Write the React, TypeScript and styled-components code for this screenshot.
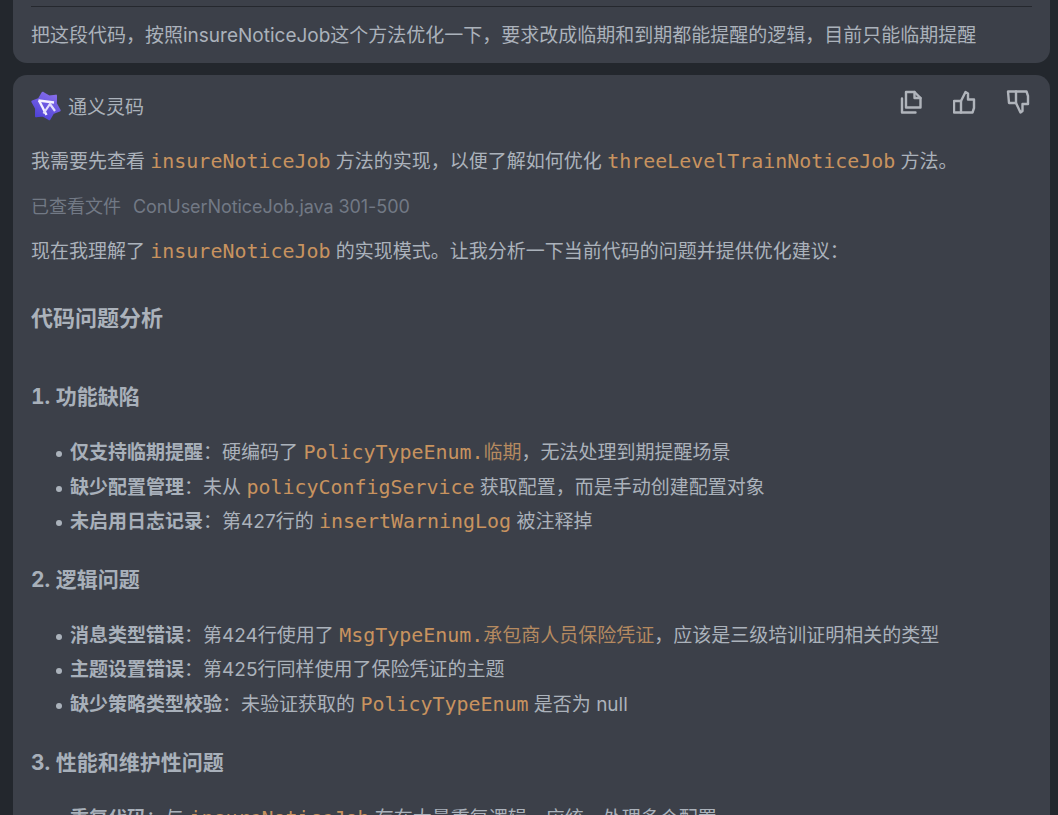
import React from "react";
import styled, { createGlobalStyle } from "styled-components";

const Global = createGlobalStyle`
  html, body { margin: 0; padding: 0; height: 815px; overflow: hidden; background: #23272d; }
  #root { height: 815px; overflow: hidden; }
`;

const Page = styled.div`
  padding: 0 8px 0 13px;
  display: flex;
  flex-direction: column;
  gap: 12px;
  font-family: "Inter", "Noto Sans CJK SC", sans-serif;
  font-size: 19px;
  color: #abb2bb;
`;

const QuestionCard = styled.section`
  height: 63px;
  box-sizing: border-box;
  background: #3c4049;
  border-radius: 0 0 14px 14px;
  padding: 6px 18px 0;
`;

const Rule = styled.div`
  height: 1px;
  background: #25282e;
  margin-bottom: 14px;
`;

const QuestionText = styled.div`
  line-height: 30px;
`;

const AnswerCard = styled.section`
  background: #3c4049;
  border-radius: 14px 14px 0 0;
  padding: 11px 18px 0;
  height: 760px;
  box-sizing: border-box;
`;

const Header = styled.header`
  display: flex;
  align-items: center;
  justify-content: space-between;
  height: 38px;
`;

const Brand = styled.div`
  display: flex;
  align-items: center;
  gap: 7px;
  margin-top: 1px;
`;

const Actions = styled.div`
  display: flex;
  gap: 29px;
  margin-top: -6px;
  margin-right: 2px;
`;

const Para = styled.p<{ $top: number }>`
  margin: ${(p) => p.$top}px 0 0;
  line-height: 30px;
`;

const Muted = styled.p`
  margin: 15px 0 0;
  line-height: 30px;
  font-size: 18px;
  color: #727985;
  display: flex;
  gap: 12px;
`;

const MutedFile = styled.span`
  letter-spacing: -0.07px;
`;

const Code = styled.code`
  font-family: "DejaVu Sans Mono", monospace;
  font-size: 19.95px;
  line-height: 1;
  color: #c8935f;
`;

const CodeCn = styled.span`
  font-family: "Inter", "Noto Sans CJK SC", sans-serif;
  font-size: 19px;
  color: #b58a60;
`;

const H2 = styled.h2`
  margin: 29px 0 0;
  font-size: 22px;
  line-height: 44px;
  font-weight: 700;
  color: #abb2bb;
`;

const H3 = styled.h3<{ $top: number }>`
  margin: ${(p) => p.$top}px 0 0;
  font-size: 21px;
  line-height: 36px;
  font-weight: 700;
  font-variant-numeric: tabular-nums;
  color: #a8b0ba;
`;

const List = styled.ul`
  margin: 21px 0 0;
  padding: 0 0 0 39px;
  list-style: none;
  line-height: 34.5px;
`;

const Item = styled.li`
  &::before {
    content: "";
    display: inline-block;
    width: 6px;
    height: 6px;
    border-radius: 50%;
    background: #abb2bb;
    margin: 0 8px 0 -14px;
    vertical-align: 2px;
  }
`;

const Strong = styled.strong`
  font-weight: 700;
  color: #a8b0ba;
`;

const LogoMark = styled.svg`
  width: 30px;
  height: 30px;
  flex: none;
`;

const Logo = () => (
  <LogoMark viewBox="0 0 30 30">
    <defs>
      <linearGradient id="lg" x1="0.1" y1="1" x2="0.9" y2="0">
        <stop offset="0" stopColor="#4a3fd6" />
        <stop offset="1" stopColor="#8a70ea" />
      </linearGradient>
    </defs>
    <g transform="rotate(-14 15 15)">
      <path
        d="M15 1.5 L20 6.6 L27 7.5 L25 15 L27 22.5 L20 23.4 L15 28.5 L10 23.4 L3 22.5 L5 15 L3 7.5 L10 6.6 Z"
        fill="url(#lg)"
        stroke="url(#lg)"
        strokeWidth="2.4"
        strokeLinejoin="round"
      />
    </g>
    <path d="M7.5 9.5 L23 11.5" stroke="#f4f2ff" strokeWidth="2.4" fill="none" />
    <path d="M8 9.5 L15.5 24" stroke="#f4f2ff" strokeWidth="2.4" fill="none" />
    <path d="M12.5 22.5 L19 13 L24 20" stroke="#e2ddfb" strokeWidth="2.2" fill="none" />
  </LogoMark>
);

const IconSvg = styled.svg`
  width: 24px;
  height: 24px;
  fill: none;
  stroke: #b0b4bb;
  stroke-width: 2.4;
  stroke-linejoin: round;
  stroke-linecap: round;
`;

const CopyIcon = () => (
  <IconSvg viewBox="0 0 24 24">
    <path d="M6 2 H14.5 L20.5 8 V17.5 H6 Z" />
    <path d="M14.5 2 V8 H20.5" />
    <path d="M2 8.5 V22.5 H15.5" />
  </IconSvg>
);

const ThumbUp = () => (
  <IconSvg viewBox="0 0 24 24">
    <path d="M1 11 H8 V22.5 H1 Z" />
    <path d="M8 11 L12.5 2 L15 3.5 V9.5 H21 V18 L19.5 22.5 H8" />
  </IconSvg>
);

const ThumbDown = () => (
  <IconSvg viewBox="0 0 24 24">
    <path d="M2 1.5 H10 V13 H3 Z" />
    <path d="M10 13 L14.5 22.5 L16.5 21 V14 H22 V6 L20.5 1.5 H10" />
  </IconSvg>
);

export default function App() {
  return (
    <Page>
      <Global />
      <QuestionCard>
        <Rule />
        <QuestionText>把这段代码，按照insureNoticeJob这个方法优化一下，要求改成临期和到期都能提醒的逻辑，目前只能临期提醒</QuestionText>
      </QuestionCard>
      <AnswerCard>
        <Header>
          <Brand>
            <Logo />
            <span>通义灵码</span>
          </Brand>
          <Actions>
            <CopyIcon />
            <ThumbUp />
            <ThumbDown />
          </Actions>
        </Header>
        <Para $top={23}>我需要先查看 <Code>insureNoticeJob</Code> 方法的实现，以便了解如何优化 <Code>threeLevelTrainNoticeJob</Code> 方法。</Para>
        <Muted><span>已查看文件</span><MutedFile>ConUserNoticeJob.java 301-500</MutedFile></Muted>
        <Para $top={15}>现在我理解了 <Code>insureNoticeJob</Code> 的实现模式。让我分析一下当前代码的问题并提供优化建议：</Para>
        <H2>代码问题分析</H2>
        <H3 $top={39}>1. 功能缺陷</H3>
        <List>
          <Item><Strong>仅支持临期提醒</Strong>：硬编码了 <Code>PolicyTypeEnum.<CodeCn>临期</CodeCn></Code>，无法处理到期提醒场景</Item>
          <Item><Strong>缺少配置管理</Strong>：未从 <Code>policyConfigService</Code> 获取配置，而是手动创建配置对象</Item>
          <Item><Strong>未启用日志记录</Strong>：第427行的 <Code>insertWarningLog</Code> 被注释掉</Item>
        </List>
        <H3 $top={22}>2. 逻辑问题</H3>
        <List>
          <Item><Strong>消息类型错误</Strong>：第424行使用了 <Code>MsgTypeEnum.<CodeCn>承包商人员保险凭证</CodeCn></Code>，应该是三级培训证明相关的类型</Item>
          <Item><Strong>主题设置错误</Strong>：第425行同样使用了保险凭证的主题</Item>
          <Item><Strong>缺少策略类型校验</Strong>：未验证获取的 <Code>PolicyTypeEnum</Code> 是否为 null</Item>
        </List>
        <H3 $top={23}>3. 性能和维护性问题</H3>
        <List>
          <Item><Strong>重复代码</Strong>：与 <Code>insureNoticeJob</Code> 存在大量重复逻辑，应统一处理多个配置</Item>
        </List>
      </AnswerCard>
    </Page>
  );
}
